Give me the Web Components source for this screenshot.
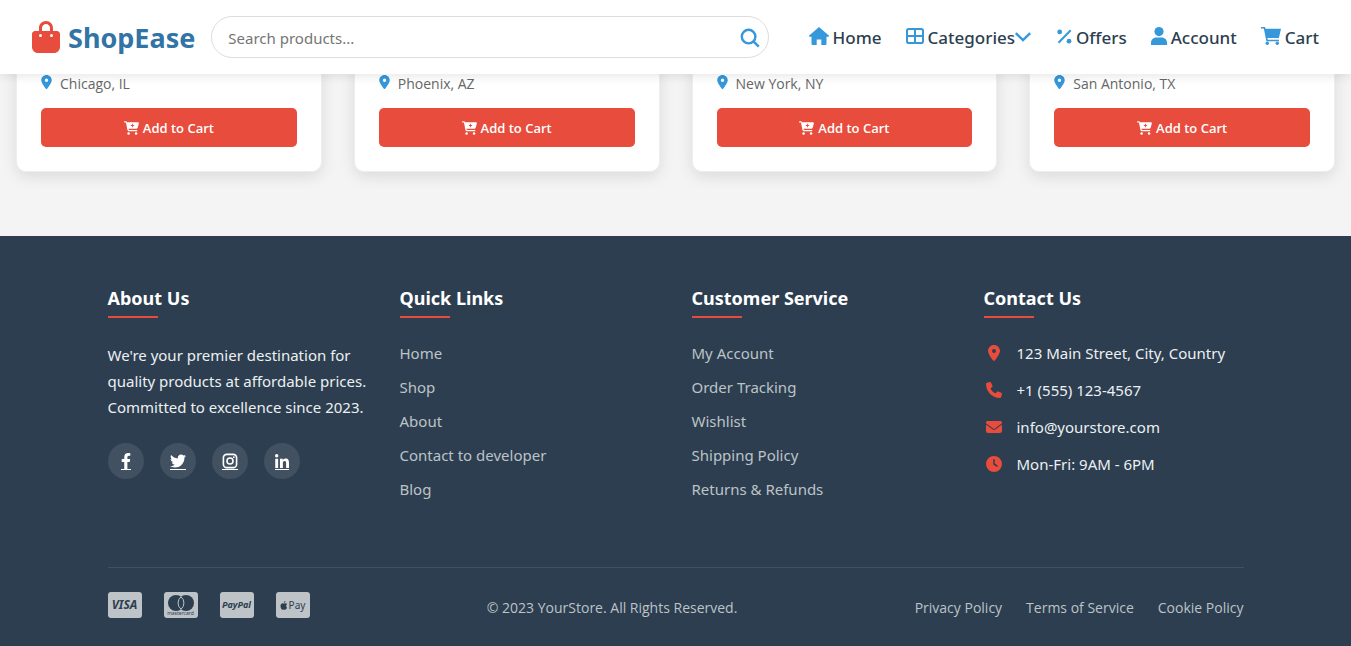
<!DOCTYPE html>
<html lang="en">
<head>
<meta charset="utf-8">
<meta name="viewport" content="width=device-width, initial-scale=1">
<title>ShopEase</title>
<style>
  body { margin: 0; background: #f4f4f4; color: #333; font: 15px/26px "Noto Sans", "Open Sans", sans-serif; }
  main { display: grid; grid-template-columns: repeat(4, minmax(0, 1fr)); gap: 32px; padding: 0 16px 64px; }
</style>
</head>
<body>
<shop-header></shop-header>
<main>
  <product-card>Chicago, IL</product-card>
  <product-card>Phoenix, AZ</product-card>
  <product-card>New York, NY</product-card>
  <product-card>San Antonio, TX</product-card>
</main>
<shop-footer></shop-footer>

<script>
const ICONS = {
  bag: ['0 0 448 512', '<path d="M160 112c0-35.3 28.7-64 64-64s64 28.7 64 64v48H160V112zm-48 48H48c-26.5 0-48 21.5-48 48V416c0 53 43 96 96 96H352c53 0 96-43 96-96V208c0-26.5-21.5-48-48-48H336V112C336 50.1 285.9 0 224 0S112 50.1 112 112v48zm24 48a24 24 0 1 1 0 48 24 24 0 1 1 0-48zm152 24a24 24 0 1 1 48 0 24 24 0 1 1 -48 0z"/>'],
  pin: ['0 0 384 512', '<path d="M215.7 499.2C267 435 384 279.4 384 192C384 86 298 0 192 0S0 86 0 192c0 87.4 117 243 168.3 307.2c12.3 15.3 35.1 15.3 47.4 0zM192 128a64 64 0 1 1 0 128 64 64 0 1 1 0-128z"/>'],
  search: ['0 0 20 20', '<g fill="none" stroke="currentColor" stroke-width="2.4"><circle cx="8.6" cy="8.6" r="6.8"/><path d="M13.400 13.400l5.400 5.200"/></g>'],
  home: ['0 0 20 18', '<path d="M10 0L.2 8.600Q-.3 9.600.8 9.700H2.500V16.800Q2.500 18 3.700 18H7.700V12.400H12.300V18H16.300Q17.500 18 17.500 16.800V9.700H19.200Q20.300 9.600 19.800 8.600z"/>'],
  grid: ['0 0 18 16', '<g fill="none" stroke="currentColor" stroke-width="2"><rect x="1" y="1" width="16" height="14" rx="1.800"/><path d="M9 1v14M1 8h16"/></g>'],
  chevron: ['0 0 16 10', '<path d="M.8 1.200l7.200 7 7.200-7" fill="none" stroke="currentColor" stroke-width="2.400"/>'],
  percent: ['0 0 15 15', '<circle cx="2.700" cy="2.900" r="2.400"/><circle cx="12" cy="12.200" r="2.400"/><path d="M13.700 1.200L1.500 13.700" fill="none" stroke="currentColor" stroke-width="2"/>'],
  user: ['0 0 16 18', '<circle cx="8" cy="4.600" r="4.600"/><path d="M0 18v-2c0-3 2.300-5.400 5.200-5.400h5.600c2.900 0 5.200 2.400 5.200 5.400v2z"/>'],
  cart: ['0 0 20 18', '<path d="M0 0h4l.5 1.700H20L17.900 11H6.400l.4 1.700H18v1.500H5.400L2.800 1.600H0z"/><circle cx="6.300" cy="16.200" r="1.700"/><circle cx="16.300" cy="16.200" r="1.700"/>'],
  cartPlus: ['0 0 576 512', '<path fill-rule="evenodd" d="M0 24C0 10.700 10.700 0 24 0H69.500c22 0 41.500 12.800 50.600 32h411c26.300 0 45.500 25 38.600 50.400l-41 152.300c-8.500 31.400-37 53.300-69.500 53.300H170.700l5.400 28.500c2.200 11.300 12.100 19.500 23.600 19.500H488c13.300 0 24 10.700 24 24s-10.700 24-24 24H199.700c-34.600 0-64.300-24.600-70.700-58.500L77.400 54.500c-.7-3.800-4-6.500-7.900-6.500H24C10.700 48 0 37.300 0 24zM310 96v48h-48v32h48v48h32v-48h48v-32h-48V96z"/><circle cx="176" cy="464" r="48"/><circle cx="464" cy="464" r="48"/>'],
  phone: ['0 0 512 512', '<path d="M164.900 24.600c-7.700-18.600-28-28.500-47.400-23.200l-88 24C12.100 30.200 0 46 0 64C0 311.400 200.600 512 448 512c18 0 33.800-12.100 38.600-29.500l24-88c5.300-19.400-4.600-39.700-23.200-47.400l-96-40c-16.300-6.800-35.200-2.100-46.300 11.600L304.700 368C234.300 334.700 177.300 277.700 144 207.300L193.300 167c13.700-11.200 18.400-30 11.600-46.300l-40-96z"/>'],
  mail: ['0 0 512 512', '<path d="M48 64C21.500 64 0 85.500 0 112c0 15.100 7.100 29.300 19.200 38.400L236.800 313.600c11.400 8.500 27 8.500 38.400 0L492.800 150.400c12.100-9.100 19.200-23.300 19.200-38.400c0-26.500-21.500-48-48-48H48zM0 176V384c0 35.300 28.700 64 64 64H448c35.300 0 64-28.700 64-64V176L294.400 339.200c-22.800 17.100-54 17.100-76.800 0L0 176z"/>'],
  clock: ['0 0 512 512', '<path fill-rule="evenodd" d="M256 0a256 256 0 1 1 0 512A256 256 0 1 1 256 0zM232 120V256c0 8 4 15.500 10.700 20l96 64c11 7.400 25.900 4.400 33.300-6.700s4.400-25.900-6.700-33.300L280 243.200V120c0-13.300-10.700-24-24-24s-24 10.700-24 24z"/>'],
  facebook: ['0 0 320 512', '<path d="M279.140 288l14.220-92.660h-88.910v-60.130c0-25.350 12.420-50.060 52.240-50.060h40.420V6.260S260.430 0 225.360 0c-73.220 0-121.080 44.380-121.080 124.720v70.620H22.890V288h81.390v224h100.170V288z"/>'],
  twitter: ['0 0 512 512', '<path d="M459.370 151.716c.325 4.548.325 9.097.325 13.645 0 138.720-105.583 298.558-298.558 298.558-59.452 0-114.680-17.219-161.137-47.106 8.447.974 16.568 1.299 25.340 1.299 49.055 0 94.213-16.568 130.274-44.832-46.132-.975-84.792-31.188-98.112-72.772 6.498.974 12.995 1.624 19.818 1.624 9.421 0 18.843-1.300 27.614-3.573-48.081-9.747-84.143-51.980-84.143-102.985v-1.299c13.969 7.797 30.214 12.670 47.431 13.319-28.264-18.843-46.781-51.005-46.781-87.391 0-19.492 5.197-37.360 14.294-52.954 51.655 63.675 129.300 105.258 216.365 109.807-1.624-7.797-2.599-15.918-2.599-24.040 0-57.828 46.782-104.934 104.934-104.934 30.213 0 57.502 12.670 76.670 33.137 23.715-4.548 46.456-13.320 66.599-25.340-7.798 24.366-24.366 44.833-46.132 57.827 21.117-2.273 41.584-8.122 60.426-16.243-14.292 20.791-32.161 39.308-52.628 54.253z"/>'],
  instagram: ['0 0 16 16', '<rect x="1.400" y="1.400" width="13.200" height="13.200" rx="3.400" fill="none" stroke="currentColor" stroke-width="1.600"/><circle cx="8" cy="8" r="3" fill="none" stroke="currentColor" stroke-width="1.600"/><circle cx="11.800" cy="4.200" r=".9"/>'],
  linkedin: ['0 0 448 448', '<path d="M100.280 448H7.400V148.900h92.880zM53.790 108.100C24.090 108.100 0 83.500 0 53.800a53.790 53.790 0 0 1 107.580 0c0 29.700-24.100 54.300-53.790 54.300zM447.900 448h-92.680V302.400c0-34.700-.7-79.200-48.290-79.200-48.290 0-55.690 37.700-55.690 76.700V448h-92.780V148.900h89.080v40.800h1.300c12.400-23.500 42.690-48.300 87.880-48.300 94 0 111.280 61.900 111.280 142.300V448z"/>'],
  apple: ['0 0 8 9', '<path d="M5.500 0c.1.900-.7 1.800-1.600 1.800C3.800.9 4.600.1 5.500 0zM7 6.800C6.600 7.700 6 8.700 5.300 8.700c-.5 0-.7-.3-1.300-.3s-.8.3-1.300.3C1.500 8.700.5 6.600.5 4.900c0-1.700 1.100-2.700 2.100-2.700.6 0 1 .4 1.500.4s.9-.4 1.600-.4c.5 0 1.100.3 1.500.8-1.400.8-1.200 2.900-.2 3.800z"/>']
};

const BASE = `*, *::before, *::after { box-sizing: border-box; } ul { list-style: none; margin: 0; padding: 0; } a { color: inherit; text-decoration: none; }`;

function define(name, render) {
  customElements.define(name, class extends HTMLElement {
    constructor() {
      super();
      this.attachShadow({ mode: 'open' });
    }
    connectedCallback() {
      const template = document.createElement('template');
      template.innerHTML = render(this);
      this.shadowRoot.replaceChildren(template.content.cloneNode(true));
    }
  });
}

define('shop-icon', host => {
  const [box, art] = ICONS[host.getAttribute('name')];
  return `<style>:host { display: inline-block; flex: none; } svg { display: block; width: 100%; height: 100%; fill: currentColor; }</style>
    <svg viewBox="${box}" aria-hidden="true">${art}</svg>`;
});

define('nav-link', host => `<style>${BASE}
    :host { display: block; }
    a { display: flex; align-items: center; padding-top: 2px; color: #2c3e50; font-weight: 500; font-size: 17px; line-height: 24px; white-space: nowrap; }
    shop-icon { color: #3498db; width: var(--icon-width, 20px); height: var(--icon-height, 18px); margin: 0 4px 4px 0; }
    shop-icon.after { width: 16px; height: 10px; margin: 0 2px 2px 0; }
  </style>
  <a href="#"><shop-icon name="${host.getAttribute('icon')}"></shop-icon><slot></slot>${host.hasAttribute('menu') ? '<shop-icon class="after" name="chevron"></shop-icon>' : ''}</a>`);

define('shop-header', () => `<style>${BASE}
    :host { display: block; position: sticky; top: 0; z-index: 10; background: #fff; box-shadow: 0 2px 10px rgba(0, 0, 0, .1); }
    header { display: flex; align-items: center; gap: 16px; padding: 16px 32px; }
    .logo { display: flex; align-items: center; gap: 8px; color: #3274a5; font-size: 27px; line-height: 40px; font-weight: 700; }
    .logo span { padding-top: 2px; }
    .logo shop-icon { color: #e74c3c; width: 28px; height: 32px; }
    form { flex: 1; min-width: 0; display: flex; align-items: center; height: 42px; border: 1px solid #ddd; border-radius: 21px; padding: 0 8px 0 16px; }
    input { flex: 1; min-width: 0; border: 0; outline: 0; padding: 2px 0 0; background: none; font: inherit; color: #333; }
    input::placeholder { color: #757575; }
    button { border: 0; background: none; padding: 2px 0 0; display: flex; color: #3498db; cursor: pointer; }
    button shop-icon { width: 20px; height: 20px; }
    nav ul { display: flex; gap: 24px; padding-left: 24px; }
  </style>
  <header>
    <a class="logo" href="#"><shop-icon name="bag"></shop-icon><span>ShopEase</span></a>
    <form role="search" onsubmit="return false">
      <input type="search" placeholder="Search products..." aria-label="Search products">
      <button type="submit" aria-label="Search"><shop-icon name="search"></shop-icon></button>
    </form>
    <nav><ul>
      <li><nav-link icon="home">Home</nav-link></li>
      <li><nav-link icon="grid" menu style="--icon-width:18px;--icon-height:16px">Categories</nav-link></li>
      <li><nav-link icon="percent" style="--icon-width:15px;--icon-height:15px">Offers</nav-link></li>
      <li><nav-link icon="user" style="--icon-width:16px">Account</nav-link></li>
      <li><nav-link icon="cart">Cart</nav-link></li>
    </ul></nav>
  </header>`);

define('product-card', () => `<style>${BASE}
    :host { display: block; box-sizing: border-box; margin-top: -16px; padding: 12px 24px 24px; background: #fff; border: 1px solid #eee; border-radius: 10px; box-shadow: 0 5px 15px rgba(0, 0, 0, .1); }
    p { display: flex; align-items: center; gap: 8px; margin: 0 0 12px; color: #666; font: 14px/25px "Open Sans", "Noto Sans", sans-serif; }
    p shop-icon { width: 11px; height: 14px; margin-bottom: 3px; color: #3498db; }
    button { display: flex; align-items: center; justify-content: center; gap: 4px; width: 100%; height: 39px; padding: 0; border: 0; border-radius: 5px; background: #e74c3c; color: #fff; font: 600 13px/18px "Open Sans", "Noto Sans", sans-serif; cursor: pointer; }
    button shop-icon { width: 15px; height: 14px; }
  </style>
  <p><shop-icon name="pin"></shop-icon><span><slot></slot></span></p>
  <button type="button"><shop-icon name="cartPlus"></shop-icon>Add to Cart</button>`);

define('footer-column', host => `<style>${BASE}
    :host { display: block; }
    h3 { margin: 0 0 22px; color: #fff; font-size: 18px; line-height: 28px; font-weight: 700; }
    h3::after { content: ""; display: block; width: 50px; height: 2px; margin-top: 4px; background: #e74c3c; }
  </style>
  <h3>${host.getAttribute('heading')}</h3><slot></slot>`);

define('social-link', host => `<style>${BASE}
    :host { display: block; }
    a { display: grid; place-items: center; width: 36px; height: 36px; border-radius: 50%; background: rgba(255, 255, 255, .1); color: #fff; }
    shop-icon { width: var(--icon-width, 16px); height: var(--icon-height, 16px); }
    span { display: grid; place-items: center; height: 17px; border-bottom: 1px solid #fff; }
  </style>
  <a href="#" aria-label="${host.getAttribute('name')}"><span><shop-icon name="${host.getAttribute('name')}"></shop-icon></span></a>`);

define('payment-badge', () => `<style>
    :host { display: flex; flex-direction: column; align-items: center; justify-content: center; width: 34px; height: 26px; border-radius: 3px; background: #bdc3c7; color: #2c3e50; font: italic 700 12px/12px "Noto Sans", sans-serif; }
    :host([kind="paypal"]) { font-size: 9px; }
    :host([kind="mastercard"]) { font: 400 5px/5px "Noto Sans", sans-serif; }
    :host([kind="apple"]) { flex-direction: row; font: 400 10px/12px "Noto Sans", sans-serif; gap: 1px; }
    svg { display: none; width: 26px; height: 16px; fill: currentColor; }
    :host([kind="mastercard"]) svg { display: block; }
    shop-icon { display: none; width: 8px; height: 9px; }
    :host([kind="apple"]) shop-icon { display: block; }
  </style>
  <svg viewBox="0 0 26 16" aria-hidden="true"><circle cx="8" cy="8" r="8"/><circle cx="18" cy="8" r="8"/><path d="M13 1.800a8 8 0 0 1 0 12.400 8 8 0 0 1 0-12.400z" stroke="#bdc3c7" stroke-width="1"/></svg>
  <shop-icon name="apple"></shop-icon><span><slot></slot></span>`);

const links = names => `<ul class="links">${names.map(n => `<li><a href="#">${n}</a></li>`).join('')}</ul>`;
const contact = rows => `<ul class="contact">${rows.map(([icon, text]) => `<li><shop-icon name="${icon}"></shop-icon><span>${text}</span></li>`).join('')}</ul>`;

define('shop-footer', () => `<style>${BASE}
    :host { display: block; background: #2c3e50; color: #ecf0f1; }
    footer { max-width: 1200px; margin: 0 auto; padding: 48px 32px 24px; }
    .columns { display: grid; grid-template-columns: repeat(4, minmax(0, 1fr)); gap: 32px; padding-bottom: 65px; }
    p { margin: 0 0 23px; padding-top: 2px; }
    .social { display: flex; gap: 16px; }
    .links { display: grid; gap: 8px; color: #bdc3c7; }
    .contact { display: grid; gap: 11px; }
    .contact li { display: flex; align-items: center; gap: 15px; }
    .contact shop-icon { width: 16px; height: 16px; margin-left: 2px; color: #e74c3c; }
    .bottom { display: flex; align-items: center; justify-content: space-between; padding-top: 24px; border-top: 1px solid rgba(255, 255, 255, .1); color: #bdc3c7; font: 14px/26px "Open Sans", "Noto Sans", sans-serif; }
    .bottom ul { display: flex; gap: 24px; }
    .bottom .pay { gap: 22px; padding-bottom: 4px; }
    .copy { padding-top: 2px; }
    .policy { padding-top: 2px; }
  </style>
  <footer>
    <div class="columns">
      <footer-column heading="About Us">
        <p>We're your premier destination for quality products at affordable prices. Committed to excellence since 2023.</p>
        <div class="social">
          <social-link name="facebook" style="--icon-width:10px"></social-link>
          <social-link name="twitter"></social-link>
          <social-link name="instagram"></social-link>
          <social-link name="linkedin" style="--icon-width:14px;--icon-height:14px"></social-link>
        </div>
      </footer-column>
      <footer-column heading="Quick Links">${links(['Home', 'Shop', 'About', 'Contact to developer', 'Blog'])}</footer-column>
      <footer-column heading="Customer Service">${links(['My Account', 'Order Tracking', 'Wishlist', 'Shipping Policy', 'Returns &amp; Refunds'])}</footer-column>
      <footer-column heading="Contact Us">${contact([['pin', '123 Main Street, City, Country'], ['phone', '+1 (555) 123-4567'], ['mail', 'info@yourstore.com'], ['clock', 'Mon-Fri: 9AM - 6PM']])}</footer-column>
    </div>
    <div class="bottom">
      <ul class="pay">
        <li><payment-badge kind="visa">VISA</payment-badge></li>
        <li><payment-badge kind="mastercard">mastercard</payment-badge></li>
        <li><payment-badge kind="paypal">PayPal</payment-badge></li>
        <li><payment-badge kind="apple">Pay</payment-badge></li>
      </ul>
      <div class="copy">© 2023 YourStore. All Rights Reserved.</div>
      <ul class="policy"><li><a href="#">Privacy Policy</a></li><li><a href="#">Terms of Service</a></li><li><a href="#">Cookie Policy</a></li></ul>
    </div>
  </footer>`);
</script>
</body>
</html>
